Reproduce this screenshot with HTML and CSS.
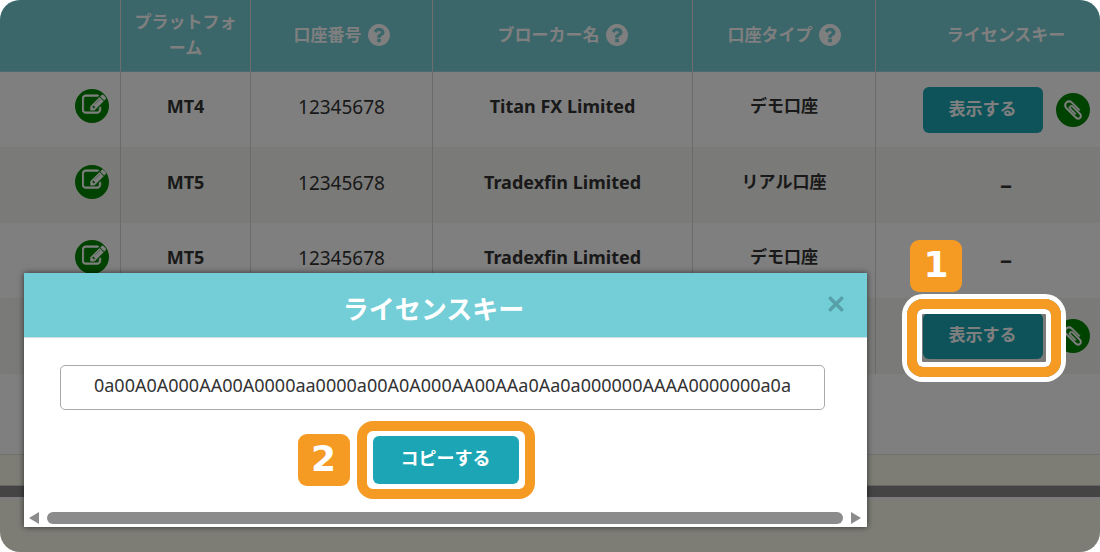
FILE: index.html
```html
<!DOCTYPE html>
<html lang="ja">
<head>
    <meta charset="UTF-8">
    <title>ライセンスキー</title>
    <link rel="stylesheet" href="styles.css">
</head>
<body>
    <svg class="sprite" aria-hidden="true">
        <symbol id="icon-help" viewBox="128 128 1536 1536">
            <path d="M1024 1376v-192q0-14-9-23t-23-9h-192q-14 0-23 9t-9 23v192q0 14 9 23t23 9h192q14 0 23-9t9-23zm256-672q0-88-55.500-163t-138.500-116-170-41q-243 0-371 213-15 24 8 42l132 100q7 6 19 6 16 0 25-12 53-68 86-92 34-24 86-24 48 0 85.500 26t37.500 59q0 38-20 61t-68 45q-63 28-115.500 86.500t-52.500 125.500v36q0 14 9 23t23 9h192q14 0 23-9t9-23q0-19 21.500-49.500t54.500-49.500q32-18 49-28.500t46-35 44.500-48 28-60.500 12.500-81zm384 192q0 209-103 385.500t-279.500 279.500-385.500 103-385.500-103-279.500-279.500-103-385.500 103-385.500 279.500-279.500 385.500-103 385.500 103 279.500 279.500 103 385.500z"/>
        </symbol>
        <symbol id="icon-edit" viewBox="0 0 1792 1792">
            <path d="M888 1184l116-116-152-152-116 116v56h96v96h56zm440-720q-16-16-33 1l-350 350q-17 17-1 33t33-1l350-350q17-17 1-33zm80 594v190q0 119-84.500 203.500t-203.500 84.500h-832q-119 0-203.500-84.500t-84.500-203.500v-832q0-119 84.500-203.500t203.500-84.500h832q63 0 117 25 15 7 18 23 3 17-9 29l-49 49q-14 14-32 8-23-6-45-6h-832q-66 0-113 47t-47 113v832q0 66 47 113t113 47h832q66 0 113-47t47-113v-126q0-13 9-22l64-64q15-15 35-7t20 29zm-96-738l288 288-672 672h-288v-288zm444 132l-92 92-288-288 92-92q28-28 68-28t68 28l152 152q28 28 28 68t-28 68z"/>
        </symbol>
        <symbol id="icon-clip" viewBox="0 0 1792 1792">
            <path d="M1596 1385q0 117-79 196t-196 79q-135 0-235-100l-777-776q-113-115-113-271 0-159 110-270t269-111q158 0 273 113l605 606q10 10 10 22 0 16-30.500 46.500t-46.500 30.500q-13 0-23-10l-606-607q-79-77-181-77-106 0-179 75t-73 181q0 105 76 181l776 777q63 63 145 63 64 0 106-42t42-106q0-82-63-145l-581-581q-26-24-60-24-29 0-48 19t-19 48q0 32 25 59l410 410q10 10 10 22 0 16-31 47t-47 31q-12 0-22-10l-410-410q-63-61-63-149 0-82 57-139t139-57q88 0 149 63l581 581q100 98 100 235z"/>
        </symbol>
    </svg>

    <div class="screen">
        <table class="accounts">
            <colgroup>
                <col>
                <col class="col-platform">
                <col class="col-number">
                <col class="col-broker">
                <col class="col-type">
                <col class="col-key">
            </colgroup>
            <thead>
                <tr>
                    <th></th>
                    <th>プラットフォーム</th>
                    <th><span class="label">口座番号<svg class="help"><use href="#icon-help"/></svg></span></th>
                    <th><span class="label">ブローカー名<svg class="help"><use href="#icon-help"/></svg></span></th>
                    <th><span class="label">口座タイプ<svg class="help"><use href="#icon-help"/></svg></span></th>
                    <th class="key">ライセンスキー</th>
                </tr>
            </thead>
            <tbody>
                <tr>
                    <td class="edit"><button class="round" type="button" aria-label="編集"><svg class="pen"><use href="#icon-edit"/></svg></button></td>
                    <td class="name">MT4</td>
                    <td class="number">12345678</td>
                    <td class="name">Titan FX Limited</td>
                    <td>デモ口座</td>
                    <td class="key">
                        <div class="actions">
                            <button class="show" type="button">表示する</button>
                            <button class="round" type="button" aria-label="コピー"><svg class="clip"><use href="#icon-clip"/></svg></button>
                        </div>
                    </td>
                </tr>
                <tr>
                    <td class="edit"><button class="round" type="button" aria-label="編集"><svg class="pen"><use href="#icon-edit"/></svg></button></td>
                    <td class="name">MT5</td>
                    <td class="number">12345678</td>
                    <td class="name">Tradexfin Limited</td>
                    <td>リアル口座</td>
                    <td class="key empty">–</td>
                </tr>
                <tr>
                    <td class="edit"><button class="round" type="button" aria-label="編集"><svg class="pen"><use href="#icon-edit"/></svg></button></td>
                    <td class="name">MT5</td>
                    <td class="number">12345678</td>
                    <td class="name">Tradexfin Limited</td>
                    <td>デモ口座</td>
                    <td class="key empty">–</td>
                </tr>
                <tr>
                    <td></td>
                    <td></td>
                    <td></td>
                    <td></td>
                    <td></td>
                    <td class="key">
                        <div class="actions">
                            <button class="show" type="button">表示する</button>
                            <button class="round" type="button" aria-label="コピー"><svg class="clip"><use href="#icon-clip"/></svg></button>
                        </div>
                    </td>
                </tr>
            </tbody>
        </table>
        <div class="pager"></div>
        <div class="divider"></div>
        <div class="footer"></div>

        <div class="overlay"></div>

        <div class="modal" role="dialog" aria-labelledby="modal-title">
            <div class="modal-header">
                <h2 id="modal-title">ライセンスキー</h2>
                <button class="close" type="button" aria-label="閉じる">
                    <svg viewBox="0 0 16 16"><path d="M2 2l12 12M14 2L2 14"/></svg>
                </button>
            </div>
            <div class="modal-body">
                <input class="license" type="text" aria-labelledby="modal-title" readonly value="0a00A0A000AA00A0000aa0000a00A0A000AA00AAa0Aa0a000000AAAA0000000a0a">
                <div class="copy-area">
                    <span class="step step-copy">2</span>
                    <button class="copy" type="button">コピーする</button>
                </div>
            </div>
            <div class="scrollbar">
                <svg viewBox="0 0 10 12"><path d="M10 0v12L0 6z"/></svg>
                <div class="thumb"></div>
                <svg viewBox="0 0 10 12"><path d="M0 0v12l10-6z"/></svg>
            </div>
        </div>

        <div class="ring"></div>
        <span class="step step-show">1</span>
    </div>
</body>
</html>
```
FILE: styles.css
```css
*{
    box-sizing: border-box;
}
body{
    margin: 0;
    background: #fff;
    font-family: "Noto Sans", "Noto Sans CJK JP", sans-serif;
    font-size: 17px;
    line-height: 26px;
    color: #333;
}
button{
    border: 0;
    padding: 0;
    font: inherit;
    cursor: pointer;
}
.sprite{
    position: absolute;
    width: 0;
    height: 0;
}
.screen{
    position: relative;
    display: flex;
    flex-direction: column;
    min-height: 100vh;
    border-radius: 20px;
    overflow: hidden;
}

/* table */
.accounts{
    width: 100%;
    table-layout: fixed;
    border-collapse: separate;
    border-spacing: 0;
    margin-bottom: 80px;
    text-align: center;
    font-weight: 600;
}
.col-platform{
    width: 130px;
}
.col-number{
    width: 182px;
}
.col-broker{
    width: 260px;
}
.col-type{
    width: 183px;
}
.col-key{
    width: 224px;
}
.accounts th{
    height: 72px;
    padding: 0 8px 2px;
    background: #77ccd5;
    border-right: 1px solid #ddd;
    border-bottom: 1px solid #99d4da;
    color: #fff;
    font-weight: 600;
    line-break: anywhere;
}
.accounts td{
    height: 75px;
    padding: 0 8px 7px;
    border-right: 1px solid #d6d6d6;
}
.accounts tr:nth-child(even) td{
    height: 76px;
    background: #f5f5f1;
}
.accounts .key{
    padding-left: 36px;
    padding-right: 0;
    border-right: 0;
}
.accounts td.key{
    padding-bottom: 0;
}
.accounts .edit{
    padding-right: 11px;
    text-align: right;
}
.accounts .name{
    font-size: 18px;
    font-weight: 700;
}
.accounts .number{
    padding-bottom: 5px;
    font-size: 19px;
    font-weight: 400;
}
.accounts td.empty{
    padding-bottom: 3px;
    font-size: 24px;
    font-weight: 700;
}
.label{
    display: flex;
    align-items: center;
    justify-content: center;
    gap: 6px;
}
.help{
    width: 22px;
    height: 22px;
    fill: #fff;
}
.round{
    display: inline-flex;
    align-items: center;
    justify-content: center;
    width: 34px;
    height: 34px;
    border-radius: 50%;
    background: #008400;
    vertical-align: middle;
}
.round svg{
    fill: #fff;
    stroke: #fff;
    stroke-width: 40;
}
.pen{
    width: 24px;
    height: 24px;
    margin: 0 0 3px 3px;
}
.clip{
    width: 22px;
    height: 22px;
}
.actions{
    display: flex;
    align-items: center;
    justify-content: center;
    gap: 13px;
}
.show, .copy{
    background: #1ca6b5;
    border-radius: 6px;
    color: #fff;
}
.show{
    width: 120px;
    height: 46px;
    padding-bottom: 2px;
}

/* below the table */
.pager{
    height: 31px;
    background: #fafbec;
    border-top: 1px solid #e2e2e2;
}
.divider{
    height: 15px;
    background: #888;
    border-top: 1px solid #ccc;
    border-bottom: 3px solid #f8f8f8;
}
.footer{
    flex: 1;
    background: #fafbec;
}
.overlay{
    position: absolute;
    inset: 0;
    background: rgba(0, 0, 0, 0.5);
}

/* modal */
.modal{
    position: absolute;
    top: 273px;
    left: 24px;
    right: 233px;
    background: #fff;
    box-shadow: 0 0 6px rgba(0, 0, 0, 0.6);
}
.modal-header{
    position: relative;
    padding: 16px 24px 8px 0;
    background: #73ced7;
    border-bottom: 1px solid #ccdfe1;
    color: #fff;
    text-align: center;
}
.modal-header h2{
    margin: 0;
    font-size: 26px;
    line-height: 40px;
}
.close{
    position: absolute;
    top: 22px;
    right: 22px;
    width: 18px;
    height: 18px;
    background: none;
}
.close svg{
    display: block;
    stroke: #57a0a8;
    stroke-width: 3;
}
.modal-body{
    display: flex;
    flex-direction: column;
    align-items: center;
    padding: 27px 42px 9px 36px;
}
.license{
    width: 100%;
    height: 45px;
    margin-bottom: 11px;
    padding: 0 0 6px;
    border: 1px solid #aaa;
    border-radius: 5px;
    font-family: "Noto Sans", sans-serif;
    font-size: 18px;
    color: #333;
    text-align: center;
}
.copy-area{
    position: relative;
    margin-left: 6px;
    padding: 5px 6px;
    border: 10px solid #f59b23;
    border-radius: 16px;
}
.copy{
    display: block;
    width: 146px;
    height: 48px;
    padding-bottom: 4px;
    font-size: 18px;
    font-weight: 600;
}
.scrollbar{
    display: flex;
    align-items: center;
    gap: 8px;
    height: 19px;
    padding: 0 6px 0 5px;
}
.scrollbar svg{
    width: 10px;
    height: 12px;
    fill: #8b8b8b;
}
.thumb{
    flex: 1;
    height: 12px;
    border-radius: 6px;
    background: #8b8b8b;
}

/* numbered steps */
.step{
    position: absolute;
    width: 52px;
    height: 52px;
    border-radius: 9px;
    background: #f59b23;
    color: #fff;
    font: bold 36px/50px "DejaVu Sans", sans-serif;
    text-align: center;
}
.step-copy{
    top: 3px;
    right: 100%;
    margin-right: 17px;
}
.step-show{
    top: 240px;
    right: 138px;
}
.ring{
    position: absolute;
    top: 299px;
    right: 39px;
    width: 154px;
    height: 78px;
    border: 10px solid #f59b23;
    border-radius: 16px;
    box-shadow: 0 0 0 5px #fff, inset 0 0 0 5px #fff;
}
```
